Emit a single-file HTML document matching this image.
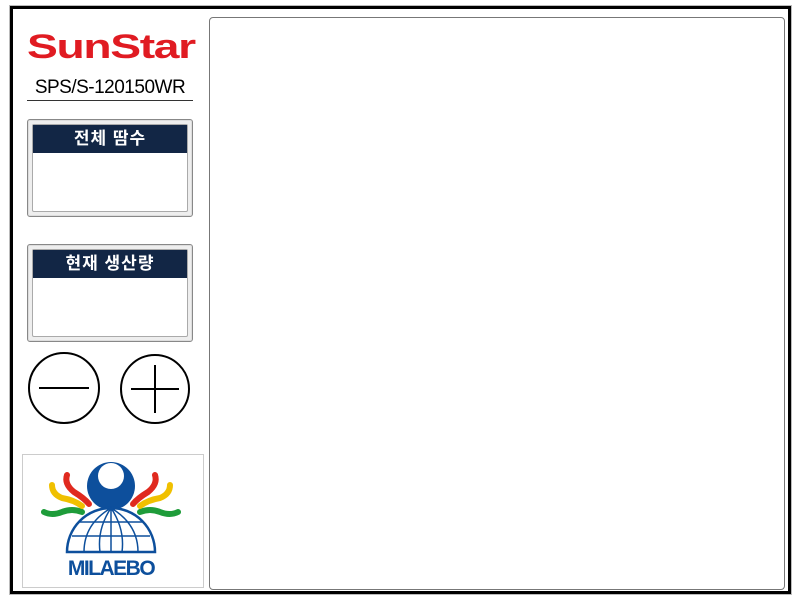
<!DOCTYPE html>
<html><head><meta charset="utf-8"><style>
body{margin:0;width:800px;height:600px;background:#fff;position:relative;overflow:hidden;font-family:"Liberation Sans","Noto Sans CJK KR",sans-serif}
.outer{position:absolute;left:10px;top:6px;width:775px;height:582px;border:3px solid #000;box-shadow:0 0 0 1px #bbb}
.main{position:absolute;left:209px;top:17px;width:574px;height:571px;border:1px solid #777;border-radius:4px;background:#fff}
.logo{position:absolute;left:27px;top:29px;font-family:"Liberation Sans",sans-serif;font-weight:900;font-size:34px;color:#e01b22;letter-spacing:-1px;transform:scaleX(1.36);transform-origin:left;line-height:36px}
.model{position:absolute;left:27px;top:76px;width:166px;text-align:center;font-size:19px;border-bottom:1px solid #333;height:24px;line-height:24px;letter-spacing:-0.5px}
.box{position:absolute;left:27px;width:164px;height:96px;border:1px solid #888;border-radius:3px;background:#eee;box-shadow:inset 0 0 0 1px #ddd}
.box .in{position:absolute;left:4px;top:4px;right:4px;bottom:4px;background:#fff;border:1px solid #aaa;border-radius:2px}
.box .hd{height:28px;background:#122645;color:#fff;font-weight:bold;font-size:17px;text-align:center;line-height:28px;letter-spacing:1px}
.mil{position:absolute;left:22px;top:454px;width:180px;height:132px;border:1px solid #ccc}
</style></head><body>
<div class="outer"></div>
<div class="main"></div>
<div class="logo">SunStar</div>
<div class="model">SPS/S-120150WR</div>
<div class="box" style="top:119px"><div class="in"><div class="hd">전체 땀수</div></div></div>
<div class="box" style="top:244px"><div class="in"><div class="hd">현재 생산량</div></div></div>
<svg style="position:absolute;left:0;top:0" width="220" height="440">
<circle cx="64" cy="388" r="35" fill="none" stroke="#000" stroke-width="2"/>
<line x1="39" y1="388" x2="89" y2="388" stroke="#000" stroke-width="2"/>
<circle cx="155" cy="389" r="34" fill="none" stroke="#000" stroke-width="2"/>
<line x1="131" y1="389" x2="179" y2="389" stroke="#000" stroke-width="2"/>
<line x1="155" y1="365" x2="155" y2="413" stroke="#000" stroke-width="2"/>
</svg>
<div class="mil"></div>
<svg style="position:absolute;left:22px;top:454px" width="180" height="132">
<circle cx="89" cy="32" r="24" fill="#0d4f9c"/>
<circle cx="89" cy="22" r="13" fill="#fff"/>
<g fill="none" stroke-linecap="round" stroke-width="6">
<path d="M22 58 Q30 62 40 58 Q50 54 60 58" stroke="#1e9c3a"/>
<path d="M156 58 Q148 62 138 58 Q128 54 118 58" stroke="#1e9c3a"/>
<path d="M30 31 Q30 40 40 44 Q52 46 60 52" stroke="#f0c000"/>
<path d="M148 31 Q148 40 138 44 Q126 46 118 52" stroke="#f0c000"/>
<path d="M45 21 Q42 30 52 38 Q62 44 67 50" stroke="#e02a1f"/>
<path d="M133 21 Q136 30 126 38 Q116 44 111 50" stroke="#e02a1f"/>
</g>
<g fill="none" stroke="#0d4f9c" stroke-width="1.5">
<path d="M45 98 A44 44 0 0 1 133 98 Z" stroke-width="2.5"/>
<path d="M89 54 Q62 70 62 98 M89 54 Q116 70 116 98 M89 54 Q75 75 78 98 M89 54 Q103 75 100 98 M89 54 V98"/>
<path d="M58 68 H120 M50 82 H128"/>
</g>
<text x="89" y="121" text-anchor="middle" font-family="Liberation Sans" font-weight="bold" font-size="21" fill="#0d4f9c" letter-spacing="-1.5">MILAEBO</text>
</svg>
</body></html>
